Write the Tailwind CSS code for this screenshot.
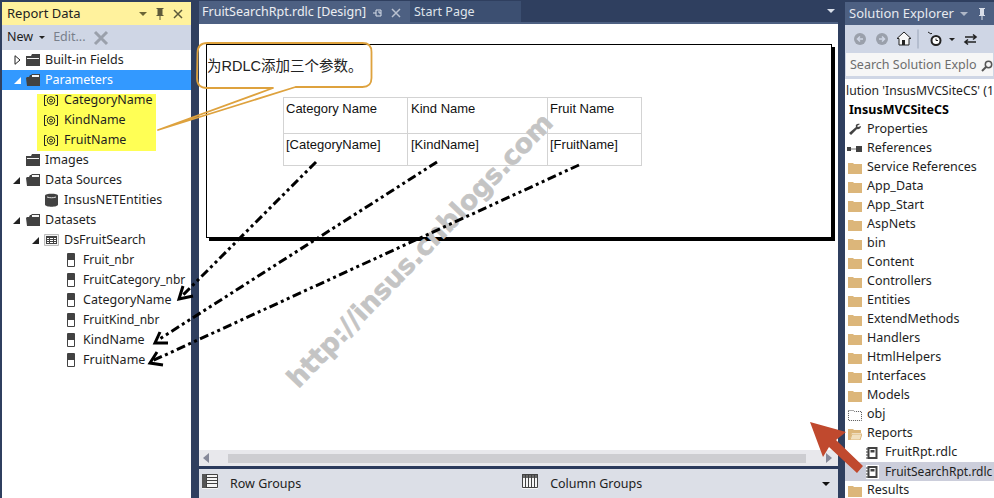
<!DOCTYPE html>
<html><head><meta charset="utf-8"><script src="https://cdn.jsdelivr.net/npm/@tailwindcss/browser@4"></script></head>
<body class="m-0 w-[994px] h-[498px] overflow-hidden bg-[#2f3f5f] font-['Noto_Sans','Noto_Sans_CJK_SC',sans-serif] text-[12.5px] text-[#1e1e1e] relative">
<svg class="absolute w-0 h-0">
<defs>
<symbol id="fd" viewBox="0 0 16 14"><path d="M1 3h5l1 -2h8v12H1z" fill="#424242"/><path d="M2 5h12v1H2z" fill="#f6f6f6"/></symbol>
<symbol id="fo" viewBox="0 0 16 14"><path d="M1 5l1-1h2l1-2h1l1-1h8v12H2z" fill="#424242"/><path d="M7 2h7v2H7z" fill="#f6f6f6"/></symbol>
<symbol id="fy" viewBox="0 0 14 12"><path d="M0 1h5l1 1h8v10H0z" fill="#dcb67a"/></symbol>
<symbol id="fld" viewBox="0 0 8 14"><path d="M.5.5h7v13h-7z" fill="#fff" stroke="#424242"/><path d="M1 1h6v6H1z" fill="#424242"/></symbol>
<symbol id="par" viewBox="0 0 14 11"><path d="M2.500.5h-2v10h2M11.500.5h2v10h-2" stroke="#222" fill="none"/><circle cx="7" cy="5.500" r="3.800" fill="none" stroke="#222"/><circle cx="7" cy="5.500" r="1.500" fill="none" stroke="#222"/></symbol>
<symbol id="rd" viewBox="0 0 13 14"><path d="M0 0h13v14H0z" fill="#fff"/><path d="M1.500 1h10v12h-10z" fill="#424242"/><path d="M3.500 3h6v8h-6z" fill="#fff"/><path d="M4.500 4h4v2.500h-4z" fill="#424242"/><path d="M0 3h2M0 6h2M0 9h2M0 12h2" stroke="#424242"/></symbol>
</defs>
</svg>

<div class="flex w-full h-full">
  <!-- Left panel -->
  <div class="w-[199px] shrink-0 pl-[2px] pr-[8px] flex flex-col">
    <div class="h-[23px] mt-[2px] shrink-0 bg-[#fff29d] flex items-center pl-[5px] pr-[6px] text-[13px] text-[#222]">
      <span class="flex-1">Report Data</span>
      <svg class="w-[52px] h-[14px]" viewBox="0 0 52 14"><path d="M6 5h8l-4 4z" fill="#6b6535"/><path d="M23.500 1h7v1h-1v6h1v1h-7v-1h1V2h-1zM26.500 9h1v4h-1z" fill="#5d5a3a"/><path d="M41 3l8 8m0-8l-8 8" stroke="#5d5a3a" stroke-width="1.500"/></svg>
    </div>
    <div class="h-[25px] shrink-0 bg-[#cfd6e5] flex items-center pl-[5px]">
      <span>New</span>
      <svg class="w-[6px] h-[4px] ml-[6px]" viewBox="0 0 6 4"><path d="M0 0h6L3 3z" fill="#222"/></svg>
      <span class="ml-[8px] text-[#787f8b]">Edit...</span>
      <svg class="w-[16px] h-[16px] ml-[7px]" viewBox="0 0 16 16"><path d="M2 2l12 12M14 2L2 14" stroke="#9aa0ab" stroke-width="3"/></svg>
    </div>
    <div class="flex-1 bg-white flex flex-col">
      <div class="h-[20px] flex items-center pl-[12px]"><svg class="w-[7px] h-[10px] mr-[4px]" viewBox="0 0 7 10"><path d="M1 .7L6 5 1 9.300z" fill="#fff" stroke="#222"/></svg><svg class="w-[16px] h-[14px] mr-[4px]"><use href="#fd"/></svg>Built-in Fields</div>
      <div class="h-[20px] flex items-center pl-[12px] bg-[#3399ff] text-white"><svg class="w-[7px] h-[7px] mr-[4px]" viewBox="0 0 7 7"><path d="M7 0v7H0z" fill="#fff"/></svg><svg class="w-[16px] h-[14px] mr-[4px]"><use href="#fo"/></svg>Parameters</div>
      <div class="h-[60px] pt-[4px] pl-[35px]">
        <div class="w-[119px] h-[57px] bg-[#ffff55] flex flex-col pl-[7px]">
          <div class="h-[12px] mb-[4px] flex items-center"><svg class="w-[14px] h-[11px] mr-[6px]"><use href="#par"/></svg>CategoryName</div>
          <div class="h-[20px] flex items-center"><svg class="w-[14px] h-[11px] mr-[6px]"><use href="#par"/></svg>KindName</div>
          <div class="h-[20px] flex items-center"><svg class="w-[14px] h-[11px] mr-[6px]"><use href="#par"/></svg>FruitName</div>
        </div>
      </div>
      <div class="h-[20px] flex items-center pl-[23px]"><svg class="w-[16px] h-[14px] mr-[4px]"><use href="#fd"/></svg>Images</div>
      <div class="h-[20px] flex items-center pl-[11px]"><svg class="w-[7px] h-[7px] mr-[5px]" viewBox="0 0 7 7"><path d="M7 0v7H0z" fill="#222"/></svg><svg class="w-[16px] h-[14px] mr-[4px]"><use href="#fo"/></svg>Data Sources</div>
      <div class="h-[20px] flex items-center pl-[43px]"><svg class="w-[13px] h-[14px] mr-[6px]" viewBox="0 0 13 14"><path d="M0 2.500C0 0 13 0 13 2.500v9c0 3-13 3-13 0z" fill="#424242"/><path d="M2 4c3 1 6 1 9 0" stroke="#ddd" fill="none"/></svg>InsusNETEntities</div>
      <div class="h-[20px] flex items-center pl-[11px]"><svg class="w-[7px] h-[7px] mr-[5px]" viewBox="0 0 7 7"><path d="M7 0v7H0z" fill="#222"/></svg><svg class="w-[16px] h-[14px] mr-[4px]"><use href="#fo"/></svg>Datasets</div>
      <div class="h-[20px] flex items-center pl-[30px]"><svg class="w-[7px] h-[7px] mr-[5px]" viewBox="0 0 7 7"><path d="M7 0v7H0z" fill="#222"/></svg><svg class="w-[15px] h-[14px] mr-[5px]" viewBox="0 0 15 14"><path d="M.5 1.500h14v11H.5z" fill="#f3f3f3" stroke="#bbb"/><path d="M2 3h11v8H2z" fill="#424242"/><path d="M3 5h2v1H3zM6 5h3v1H6zM10 5h2v1h-2zM3 7h2v1H3zM6 7h3v1H6zM10 7h2v1h-2zM3 9h2v1H3zM6 9h3v1H6zM10 9h2v1h-2z" fill="#fff"/></svg>DsFruitSearch</div>
      <div class="h-[20px] flex items-center pl-[65px] text-[12px]"><svg class="w-[8px] h-[14px] mr-[8px]"><use href="#fld"/></svg>Fruit_nbr</div>
      <div class="h-[20px] flex items-center pl-[65px] text-[12px]"><svg class="w-[8px] h-[14px] mr-[8px]"><use href="#fld"/></svg>FruitCategory_nbr</div>
      <div class="h-[20px] flex items-center pl-[65px]"><svg class="w-[8px] h-[14px] mr-[8px]"><use href="#fld"/></svg>CategoryName</div>
      <div class="h-[20px] flex items-center pl-[65px] text-[12px]"><svg class="w-[8px] h-[14px] mr-[8px]"><use href="#fld"/></svg>FruitKind_nbr</div>
      <div class="h-[20px] flex items-center pl-[65px]"><svg class="w-[8px] h-[14px] mr-[8px]"><use href="#fld"/></svg>KindName</div>
      <div class="h-[20px] flex items-center pl-[65px]"><svg class="w-[8px] h-[14px] mr-[8px]"><use href="#fld"/></svg>FruitName</div>
    </div>
  </div>

  <!-- Center -->
  <div class="w-[639px] shrink-0 flex flex-col">
    <div class="h-[24px] shrink-0 flex text-white/90 text-[12.5px] border-b-2 border-[#4d6082]">
      <div class="w-[211px] mt-[1px] pt-[2px] bg-[#4d6082] flex items-center pl-[3px]"><span class="flex-1">FruitSearchRpt.rdlc [Design]</span><svg class="w-[30px] h-[12px] mr-[9px]" viewBox="0 0 30 12"><path d="M2 6h3M5 3h5v6H5zM7 5h2v2" stroke="#d8dee9" fill="none"/><path d="M21 2l8 8m0-8l-8 8" stroke="#b9c1d0" stroke-width="1.500"/></svg></div>
      <div class="w-[111px] mt-[1px] pt-[2px] bg-[#3c4f71] flex items-center pl-[4px] text-[#dfe3ea]">Start Page</div>
      <div class="flex-1 flex items-center justify-end pr-[3px]"><svg class="w-[8px] h-[5px]" viewBox="0 0 8 5"><path d="M0 0h8L4 4z" fill="#d8dee9"/></svg></div>
    </div>
    <div class="h-[426px] shrink-0 bg-white pl-[7px] pt-[20px]">
      <div class="w-[626px] h-[194px] border border-black shadow-[3px_3px_0_#000] pl-[76px] pt-[52px] font-['Liberation_Sans','Noto_Sans_CJK_SC',sans-serif] text-[13px] leading-[16px] text-[#111]">
        <div class="grid grid-cols-[124px_140px_93px] grid-rows-[36px_31px] w-[359px] border border-[#d3d3d3]">
          <div class="pl-[2px] pt-[3px] border-r border-b border-[#d3d3d3]">Category Name</div>
          <div class="pl-[3px] pt-[3px] border-r border-b border-[#d3d3d3]">Kind Name</div>
          <div class="pl-[2px] pt-[3px] border-b border-[#d3d3d3]">Fruit Name</div>
          <div class="pl-[2px] pt-[3px] border-r border-[#d3d3d3]">[CategoryName]</div>
          <div class="pl-[3px] pt-[3px] border-r border-[#d3d3d3]">[KindName]</div>
          <div class="pl-[2px] pt-[3px]">[FruitName]</div>
        </div>
      </div>
    </div>
    <div class="h-[16px] shrink-0 bg-[#e8e8ec] flex items-center pl-[4px]">
      <svg class="w-[6px] h-[10px]" viewBox="0 0 6 10"><path d="M6 0v10L0 5z" fill="#868999"/></svg>
      <div class="ml-[19px] w-[578px] h-[9px] bg-[#cdcdd1]"></div>
      <svg class="ml-[20px] w-[6px] h-[10px]" viewBox="0 0 6 10"><path d="M0 0v10l6-5z" fill="#868999"/></svg>
    </div>
    <div class="h-[3px] shrink-0 bg-[#2b3a5c]"></div>
    <div class="flex-1 bg-[#dcdfe7] flex items-center pl-[3px] relative pt-[1px]">
      <svg class="w-[16px] h-[15px] -mt-[6px]" viewBox="0 0 16 15"><path d="M0 0h16v15H0z" fill="#f5f5f5"/><path d="M.5.5h15v13H.5zM0 3.500h16M0 6.500h16M0 9.500h16M4.500 0v14" stroke="#424242" fill="none"/><path d="M0 0h4v14H0z" fill="#555"/></svg>
      <span class="ml-[12px] text-[#222]">Row Groups</span>
      <svg class="ml-[221px] w-[16px] h-[15px] -mt-[6px]" viewBox="0 0 16 15"><path d="M0 0h16v15H0z" fill="#f5f5f5"/><path d="M0 0h16v4H0z" fill="#666"/><path d="M.5.500h15v13H.5zM3.500 0v14M6.500 0v14M9.500 0v14M12.500 0v14" stroke="#424242" fill="none"/></svg>
      <span class="ml-[12px] text-[#222]">Column Groups</span>
      <svg class="absolute right-[8px] top-[13px] w-[8px] h-[5px]" viewBox="0 0 8 5"><path d="M0 0h8L4 4z" fill="#111"/></svg>
    </div>
  </div>

  <!-- Right -->
  <div class="ml-[7px] flex-1 min-w-0 flex flex-col overflow-hidden">
    <div class="h-[23px] mt-[2px] shrink-0 bg-[#4d6082] flex items-center pl-[4px] text-[13px] text-[#e6e9ef]">
      <span class="flex-1">Solution Explorer</span>
      <svg class="w-[30px] h-[14px] mr-[4px]" viewBox="0 0 30 14"><path d="M0 5h8l-4 4z" fill="#aeb7c7"/><path d="M19 1h6v1h-1v6h1v1h-6v-1h1V2h-1zM21.500 9h1v4h-1z" fill="#d8dee9"/></svg>
    </div>
    <div class="h-[28px] shrink-0 bg-[#cfd6e5] flex items-center pl-[4px]">
      <svg class="w-[132px] h-[22px] shrink-0" viewBox="0 0 132 22"><circle cx="11" cy="11" r="6" fill="#9aa0ab"/><path d="M14 11H9M11 8.500L8.500 11 11 13.500" stroke="#cfd6e5" fill="none" stroke-width="1.500"/><circle cx="33" cy="11" r="6" fill="#9aa0ab"/><path d="M30 11h5M33 8.500l2.500 2.500-2.500 2.500" stroke="#cfd6e5" fill="none" stroke-width="1.500"/><path d="M55 4l7 6.500h-2V17h-10v-6.500h-2z" fill="#f7f7f7" stroke="#222"/><path d="M53 12h3v5h-3z" fill="#222"/><path d="M69 1.500v19" stroke="#9aa5b8"/><circle cx="87" cy="12.500" r="4.500" fill="#fff" stroke="#222" stroke-width="2"/><path d="M87 10.500v2h2M79 4l3 2 1-1" stroke="#222" fill="none"/><path d="M100 10h6l-3 3z" fill="#222"/><path d="M116 9h11M124 6.500l3 2.500-3 2.500M127 14h-11M119 11.500l-3 2.500 3 2.500" stroke="#222" fill="none" stroke-width="1.600"/></svg>
    </div>
    <div class="h-[23px] shrink-0 bg-[#f6f6f6] border-x border-[#cfd6e5] flex items-center pl-[4px] pt-[2px] text-[#6d6d6d] whitespace-nowrap">Search Solution Explo
      <svg class="ml-auto w-[12px] h-[12px] shrink-0" viewBox="0 0 12 12"><circle cx="7.500" cy="4.500" r="3.200" fill="none" stroke="#555" stroke-width="1.500"/><path d="M5 7L1 11" stroke="#555" stroke-width="2"/></svg></div>
    <div class="h-[3px] shrink-0 bg-[#cfd6e5]"></div>
    <div class="flex-1 bg-white pt-[3px] whitespace-nowrap">
      <div class="h-[19px] flex items-center pl-[1px] text-[12.2px]">lution 'InsusMVCSiteCS' (1</div>
      <div class="h-[19px] flex items-center pl-[4px] font-bold text-black">InsusMVCSiteCS</div>
      <div class="h-[19px] flex items-center pl-[3px]"><svg class="w-[14px] h-[13px] mr-[5px] shrink-0" viewBox="0 0 14 13"><path d="M12 1C9 0 7 2 8 4L1 10l2 2 6-6c3 1 4-2 4-3l-3 1-1-1z" fill="#424242"/></svg>Properties</div>
      <div class="h-[19px] flex items-center pl-[2px]"><svg class="w-[15px] h-[8px] mr-[5px] shrink-0" viewBox="0 0 15 8"><path d="M0 2h4v4H0zM9 1h6v6H9z" fill="#424242"/><path d="M4 4h5" stroke="#777"/></svg>References</div>
      <div class="h-[19px] flex items-center pl-[3px]"><svg class="w-[14px] h-[12px] mr-[5px] shrink-0"><use href="#fy"/></svg>Service References</div>
      <div class="h-[19px] flex items-center pl-[3px]"><svg class="w-[14px] h-[12px] mr-[5px] shrink-0"><use href="#fy"/></svg>App_Data</div>
      <div class="h-[19px] flex items-center pl-[3px]"><svg class="w-[14px] h-[12px] mr-[5px] shrink-0"><use href="#fy"/></svg>App_Start</div>
      <div class="h-[19px] flex items-center pl-[3px]"><svg class="w-[14px] h-[12px] mr-[5px] shrink-0"><use href="#fy"/></svg>AspNets</div>
      <div class="h-[19px] flex items-center pl-[3px]"><svg class="w-[14px] h-[12px] mr-[5px] shrink-0"><use href="#fy"/></svg>bin</div>
      <div class="h-[19px] flex items-center pl-[3px]"><svg class="w-[14px] h-[12px] mr-[5px] shrink-0"><use href="#fy"/></svg>Content</div>
      <div class="h-[19px] flex items-center pl-[3px]"><svg class="w-[14px] h-[12px] mr-[5px] shrink-0"><use href="#fy"/></svg>Controllers</div>
      <div class="h-[19px] flex items-center pl-[3px]"><svg class="w-[14px] h-[12px] mr-[5px] shrink-0"><use href="#fy"/></svg>Entities</div>
      <div class="h-[19px] flex items-center pl-[3px]"><svg class="w-[14px] h-[12px] mr-[5px] shrink-0"><use href="#fy"/></svg>ExtendMethods</div>
      <div class="h-[19px] flex items-center pl-[3px]"><svg class="w-[14px] h-[12px] mr-[5px] shrink-0"><use href="#fy"/></svg>Handlers</div>
      <div class="h-[19px] flex items-center pl-[3px]"><svg class="w-[14px] h-[12px] mr-[5px] shrink-0"><use href="#fy"/></svg>HtmlHelpers</div>
      <div class="h-[19px] flex items-center pl-[3px]"><svg class="w-[14px] h-[12px] mr-[5px] shrink-0"><use href="#fy"/></svg>Interfaces</div>
      <div class="h-[19px] flex items-center pl-[3px]"><svg class="w-[14px] h-[12px] mr-[5px] shrink-0"><use href="#fy"/></svg>Models</div>
      <div class="h-[19px] flex items-center pl-[3px]"><svg class="w-[14px] h-[12px] mr-[5px] shrink-0" viewBox="0 0 14 12"><path d="M.5 1.500h5l1 1h7v9H.5z" fill="none" stroke="#555" stroke-dasharray="1 1"/></svg>obj</div>
      <div class="h-[19px] flex items-center pl-[3px]"><svg class="w-[14px] h-[12px] mr-[5px] shrink-0" viewBox="0 0 14 12"><path d="M0 1h5l1 1h7v3H4l-2 7H0z" fill="#dcb67a"/><path d="M4 6h10l-2 6H2z" fill="#f1e0c0" stroke="#dcb67a"/></svg>Reports</div>
      <div class="h-[19px] flex items-center pl-[21px]"><svg class="w-[13px] h-[14px] mr-[6px] shrink-0"><use href="#rd"/></svg>FruitRpt.rdlc</div>
      <div class="h-[19px] flex items-center pl-[21px] bg-[#cccedb] text-[12px]"><svg class="w-[13px] h-[14px] mr-[6px] shrink-0"><use href="#rd"/></svg>FruitSearchRpt.rdlc</div>
      <div class="h-[19px] flex items-center pl-[3px]"><svg class="w-[14px] h-[12px] mr-[5px] shrink-0"><use href="#fy"/></svg>Results</div>
    </div>
  </div>
</div>

<!-- callout text -->
<div class="absolute left-[207px] top-[56px] text-[14.5px] text-[#222] font-['Liberation_Sans','Noto_Sans_CJK_SC',sans-serif]">为RDLC添加三个参数。</div>

<!-- watermark -->
<div class="absolute left-[243px] top-[252px] w-[320px] text-center font-['DejaVu_Sans',sans-serif] font-bold text-[26.5px] leading-[32px] text-[#c4c4c4] [-webkit-text-stroke:0.6px_#c4c4c4] -rotate-[46deg] whitespace-nowrap">http://insus.cnblogs.com</div>

<!-- annotations -->
<svg class="absolute inset-0 w-[994px] h-[498px] pointer-events-none" viewBox="0 0 994 498" fill="none">
  <path d="M197.500 53q0-10 10-10h155q9 0 9 9v26q0 9-9 9h-67L158 130l115-42h-66q-10 0-10-10z" stroke="#dea23e" stroke-width="1.800" stroke-linejoin="round"/>
  <g stroke="#000" stroke-width="3" stroke-dasharray="9 3.500 3 3.500 3 3.500">
    <path d="M316 162L182 296"/>
    <path d="M437 162L158 340"/>
    <path d="M579 165L152 361"/>
  </g>
  <g stroke="#000" stroke-width="3" stroke-linejoin="miter" stroke-miterlimit="8">
    <path d="M183 286L179 299L193 296"/>
    <path d="M160 332L155 343L168 343"/>
    <path d="M157 352L150 363L163 365"/>
  </g>
  <path d="M810 422L846 432L836 440L863 466L857 473L829 447L823 457z" fill="#c0492e"/>
</svg>
</body></html>
